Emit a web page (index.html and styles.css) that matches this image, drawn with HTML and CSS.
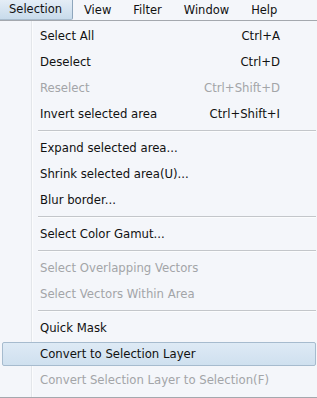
FILE: index.html
```html
<!DOCTYPE html>
<html lang="en">
<head>
    <meta charset="UTF-8">
    <meta name="viewport" content="width=device-width, initial-scale=1.0">
    <title>Selection menu</title>
    <link rel="stylesheet" href="styles.css">
</head>
<body>
    <div class="menubar">
        <div class="menubar-item active">Selection</div>
        <div class="menubar-item">View</div>
        <div class="menubar-item">Filter</div>
        <div class="menubar-item">Window</div>
        <div class="menubar-item">Help</div>
    </div>

    <div class="menu">
        <div class="menu-item"><span>Select All</span><span class="shortcut">Ctrl+A</span></div>
        <div class="menu-item"><span>Deselect</span><span class="shortcut">Ctrl+D</span></div>
        <div class="menu-item disabled"><span>Reselect</span><span class="shortcut">Ctrl+Shift+D</span></div>
        <div class="menu-item"><span>Invert selected area</span><span class="shortcut">Ctrl+Shift+I</span></div>
        <div class="separator"></div>
        <div class="menu-item"><span>Expand selected area...</span></div>
        <div class="menu-item"><span>Shrink selected area(U)...</span></div>
        <div class="menu-item"><span>Blur border...</span></div>
        <div class="separator"></div>
        <div class="menu-item"><span>Select Color Gamut...</span></div>
        <div class="separator"></div>
        <div class="menu-item disabled"><span>Select Overlapping Vectors</span></div>
        <div class="menu-item disabled"><span>Select Vectors Within Area</span></div>
        <div class="separator"></div>
        <div class="menu-item"><span>Quick Mask</span></div>
        <div class="menu-item hover"><span>Convert to Selection Layer</span></div>
        <div class="menu-item disabled"><span>Convert Selection Layer to Selection(F)</span></div>
    </div>
</body>
</html>
```

FILE: styles.css
```css
/* Menu estilo Windows */
body, html {
    margin: 0;
    padding: 0;
    background-color: #f4f6fa;
    font-family: "DejaVu Sans", sans-serif;
    font-size: 11.7px;
    color: #111;
}

.menubar {
    display: flex;
    height: 20px;
    border-bottom: 1px solid #a4a8ae;
    background-color: #f4f6fa;
}

.menubar-item {
    line-height: 20px;
    padding: 0 11px;
    font-size: 11.5px;
}

.menubar-item.active {
    padding: 0 10px 0 9px;
    width: 53px;
    height: 19px;
    line-height: 19px;
    background: linear-gradient(#e4edf6, #c8dbeb);
    border-right: 1px solid #8ea6bc;
    border-bottom: 1px solid #a9bccd;
    border-bottom-right-radius: 2px;
}

.menu {
    display: flex;
    flex-direction: column;
    padding: 2px 1px 4px 2px;
    border-bottom: 1px solid #a4a8ae;
    background: linear-gradient(to right, transparent 31px, #e3e6ea 31px, #e3e6ea 32px, #fbfcfd 32px, #fbfcfd 33px, transparent 33px);
}

.menu-item {
    display: flex;
    justify-content: space-between;
    align-items: center;
    height: 24px;
    margin: 1px 0;
    padding: 0 35px 0 37px;
    border: 1px solid transparent;
    box-sizing: border-box;
    border-radius: 2px;
    white-space: nowrap;
}

.menu-item.disabled {
    color: #a3a5a8;
}

.menu-item.hover {
    background: linear-gradient(#deeaf5, #cfe0ef);
    border-color: #a6bbce;
}

.separator {
    height: 1px;
    margin: 3px 0 3px 36px;
    border-top: 1px solid #c3c6ca;
    background-color: #fbfcfd;
}
```
